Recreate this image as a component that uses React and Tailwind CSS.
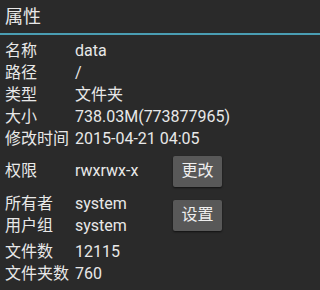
import React from 'react'

const top = [
  ['名称', 'data'],
  ['路径', '/'],
  ['类型', '文件夹'],
  ['大小', '738.03M(773877965)'],
  ['修改时间', '2015-04-21 04:05'],
]

function Row({ label, value }) {
  return (
    <div className="flex h-[22px] items-center">
      <div className="w-[70px] shrink-0">{label}</div>
      <div className="whitespace-nowrap">{value}</div>
    </div>
  )
}

function Btn({ children }) {
  return (
    <button className="h-[31px] w-[49px] rounded-[2px] bg-[#585858] text-[16px] text-[#eeeeee] shadow-[0_1px_2px_rgba(0,0,0,0.6)]">
      {children}
    </button>
  )
}

export default function App(){
  return (
    <div
      className="h-screen min-h-[290px] w-full overflow-hidden bg-[#2a2a2a] text-[16px] text-[#e8e8e8]"
      style={{ fontFamily: 'Roboto, "Noto Sans CJK SC", sans-serif' }}
    >
      <div className="flex h-[33px] items-center px-[5px] text-[18px]">属性</div>
      <div className="h-[2px] bg-[#4a9db3]" />
      <div className="px-[5px] pt-[5px]">
        {top.map(([l, v]) => <Row key={l} label={l} value={v} />)}

        <div className="mt-[5px] flex h-[32px] items-center">
          <div className="w-[70px] shrink-0">权限</div>
          <div className="w-[98px] shrink-0">rwxrwx-x</div>
          <Btn>更改</Btn>
        </div>

        <div className="mt-[6px] flex items-center">
          <div className="w-[168px] shrink-0">
            <Row label="所有者" value="system" />
            <Row label="用户组" value="system" />
          </div>
          <Btn>设置</Btn>
        </div>

        <div className="mt-[4px]">
          <Row label="文件数" value="12115" />
          <Row label="文件夹数" value="760" />
        </div>
      </div>
    </div>
  )
}
